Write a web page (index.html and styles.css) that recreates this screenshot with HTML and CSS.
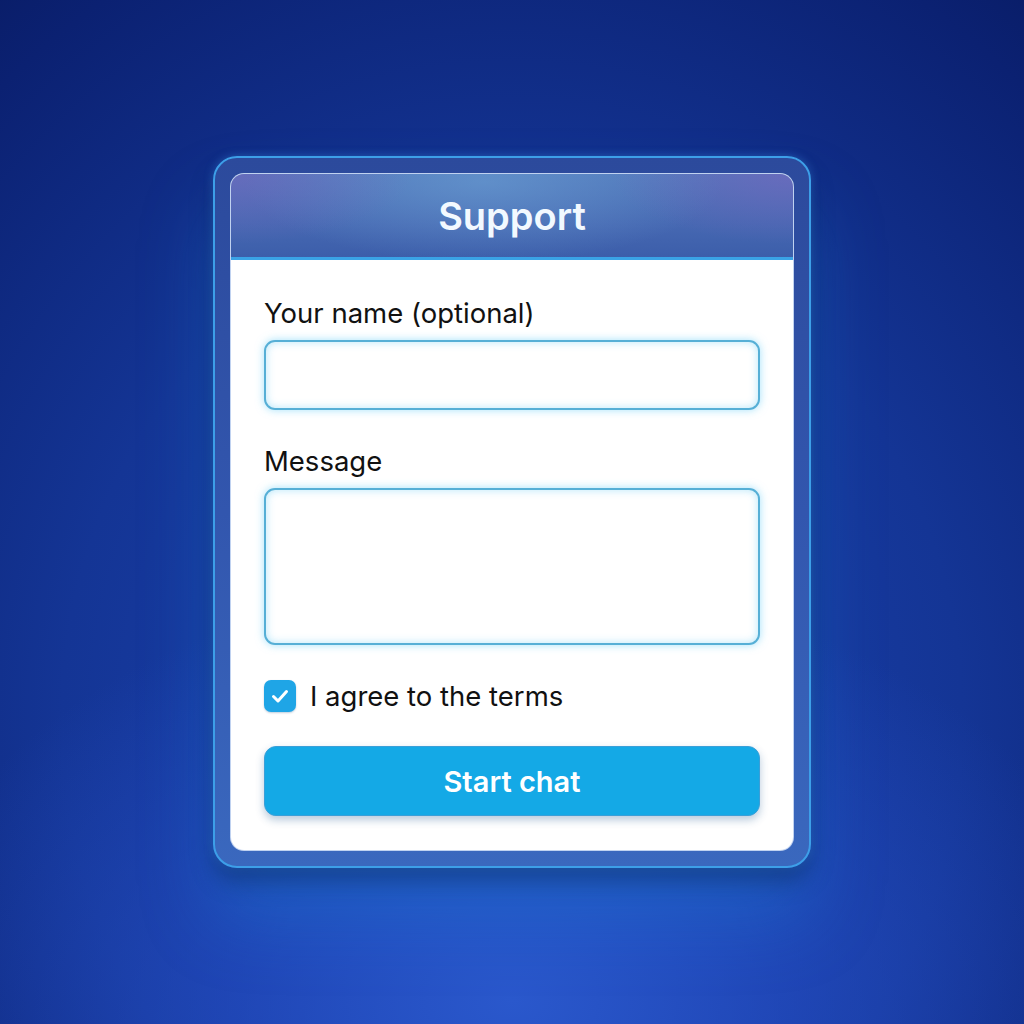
FILE: index.html
```html
<!DOCTYPE html>
<html>
<head>
<meta charset="utf-8">
<link rel="stylesheet" href="styles.css">
</head>
<body>
<div class="stage">
  <div class="frame">
    <div class="card">
      <div class="header">Support</div>
      <div class="body">
        <label class="label">Your name (optional)</label>
        <div class="field"></div>
        <label class="label label-gap">Message</label>
        <div class="field area"></div>
        <div class="check-row">
          <span class="checkbox">
            <svg viewBox="0 0 32 32" width="32" height="32"><path d="M9.5 16.5 L14 21 L22.5 11.5" fill="none" stroke="#fff" stroke-width="3" stroke-linecap="round" stroke-linejoin="round"/></svg>
          </span>
          <span class="check-label">I agree to the terms</span>
        </div>
        <div class="button">Start chat</div>
      </div>
    </div>
  </div>
</div>
</body>
</html>
```
FILE: styles.css
```css
html, body {
  margin: 0;
  padding: 0;
}
body {
  width: 1024px;
  height: 1024px;
  overflow: hidden;
  font-family: Inter, "Noto Sans", sans-serif;
  background:
    radial-gradient(ellipse 620px 420px at 512px 1000px, #2a58cc 0%, rgba(38,80,200,0.6) 45%, rgba(30,70,180,0) 100%),
    radial-gradient(ellipse 900px 1000px at 512px 720px, #1c44b4 0%, #143595 50%, #0b2172 85%, #081a60 100%);
}
.stage {
  width: 1024px;
  height: 1024px;
  display: flex;
  align-items: center;
  justify-content: center;
}
.frame {
  width: 598px;
  height: 712px;
  box-sizing: border-box;
  border: 2px solid #3d9fe8;
  border-radius: 24px;
  background: linear-gradient(180deg, #2c4a9c 0%, #3256ae 50%, #3a68be 100%);
  padding: 15px;
  box-shadow: 0 14px 22px rgba(10, 40, 90, 0.45), 0 50px 70px rgba(30, 130, 215, 0.35), 0 0 10px rgba(80, 170, 255, 0.35);
  display: flex;
}
.card {
  flex: 1;
  border-radius: 14px;
  background: #fff;
  overflow: hidden;
  display: flex;
  flex-direction: column;
  border: 1px solid rgba(150, 180, 230, 0.6);
}
.header {
  height: 86px;
  flex: none;
  box-sizing: border-box;
  border-bottom: 3px solid #3aa3e6;
  display: flex;
  align-items: center;
  justify-content: center;
  color: #f2f9ff;
  font-size: 38px;
  font-weight: 600;
  background:
    radial-gradient(ellipse 180px 70px at 0% 0%, rgba(120, 100, 190, 0.55) 0%, rgba(120,100,190,0) 100%),
    radial-gradient(ellipse 180px 70px at 100% 0%, rgba(120, 100, 190, 0.6) 0%, rgba(120,100,190,0) 100%),
    radial-gradient(ellipse 240px 80px at 45% 10%, rgba(110, 165, 215, 0.55) 0%, rgba(110,165,215,0) 100%),
    linear-gradient(180deg, #5076ba 0%, #4668b2 60%, #3c5eaa 100%);
}
.body {
  flex: 1;
  padding: 37px 33px 0 33px;
  display: flex;
  flex-direction: column;
}
.label {
  font-size: 27.5px;
  line-height: 32px;
  color: #111;
  margin-bottom: 11px;
}
.label-gap {
  margin-top: 35px;
}
.field {
  height: 70px;
  flex: none;
  box-sizing: border-box;
  border: 2px solid #56afd6;
  border-radius: 11px;
  background: #fff;
  box-shadow: 0 0 8px rgba(90, 200, 245, 0.55), inset 0 0 8px rgba(90, 200, 245, 0.45);
}
.area {
  height: 157px;
}
.check-row {
  margin-top: 35px;
  display: flex;
  align-items: center;
  gap: 14px;
  height: 32px;
}
.checkbox {
  width: 32px;
  height: 32px;
  border-radius: 7px;
  background: #1fa5e6;
  display: flex;
  align-items: center;
  justify-content: center;
  box-shadow: 0 1px 2px rgba(0, 60, 120, 0.25);
}
.checkbox svg {
  display: block;
}
.check-label {
  font-size: 27.5px;
  color: #111;
  line-height: 32px;
}
.button {
  margin-top: 34px;
  height: 70px;
  flex: none;
  box-sizing: border-box;
  border-radius: 12px;
  background: #14a9e6;
  border: 1px solid #3a9fd8;
  color: #fff;
  font-size: 29px;
  font-weight: 600;
  display: flex;
  align-items: center;
  justify-content: center;
  box-shadow: 0 4px 8px rgba(20, 80, 140, 0.3);
}
```
